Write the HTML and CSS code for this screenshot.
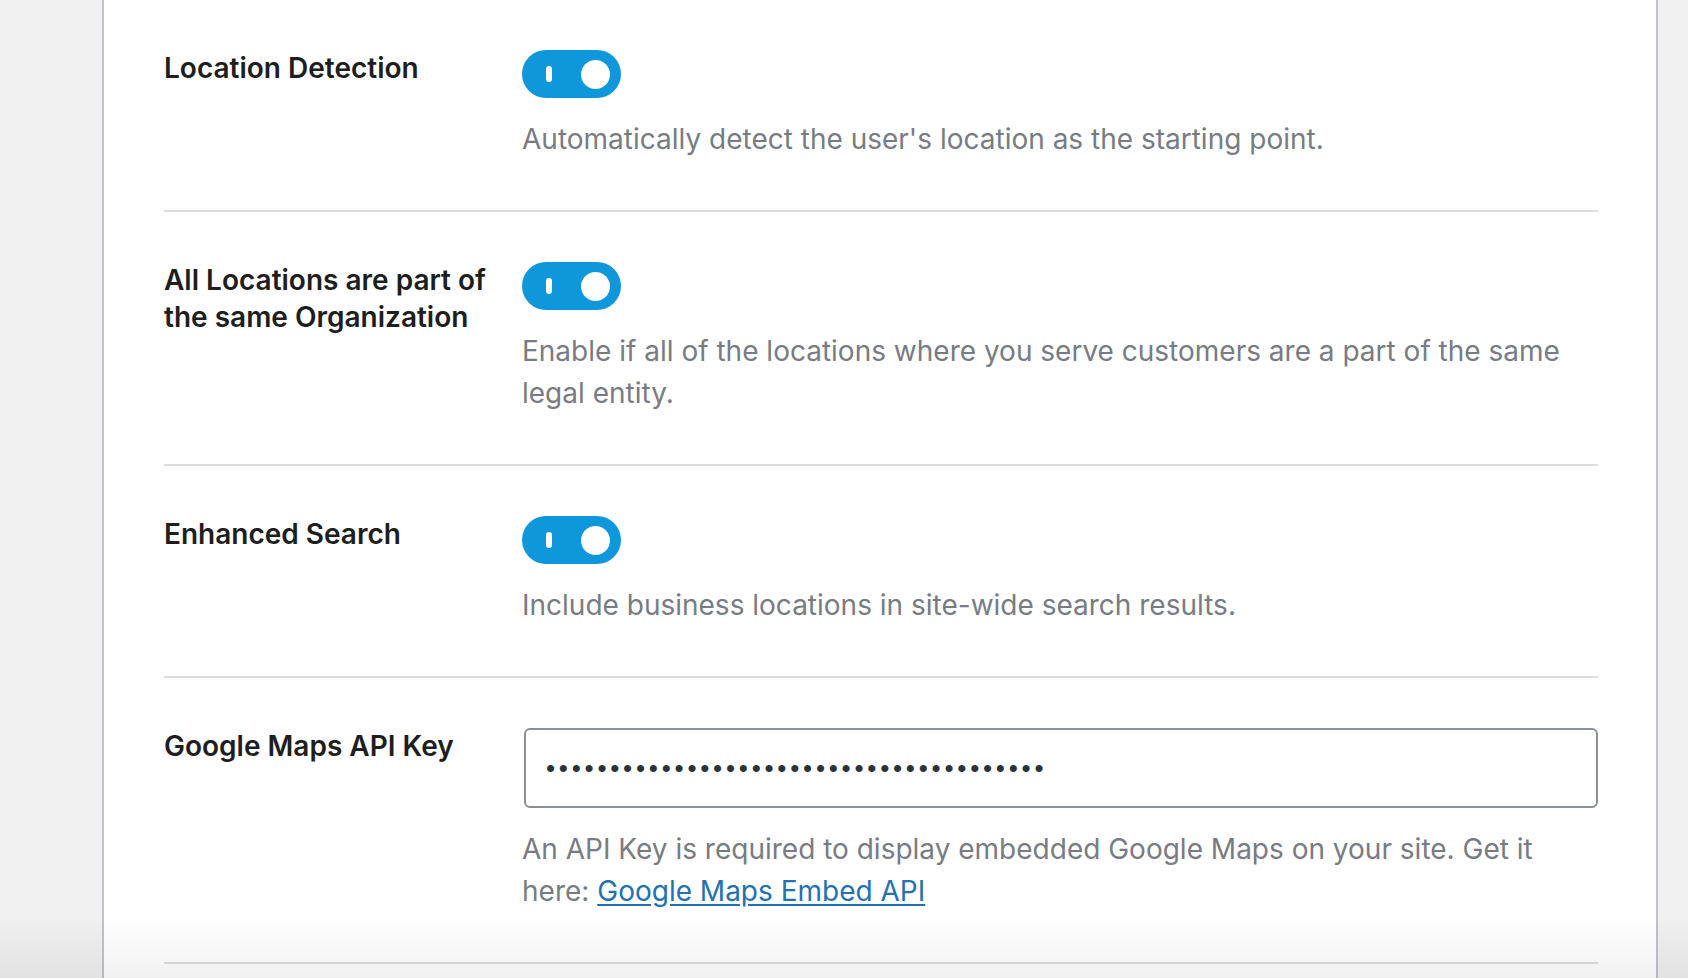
FILE: index.html
```html
<!DOCTYPE html>
<html lang="en">
<head>
<meta charset="utf-8">
<title>Local SEO settings</title>
<link rel="stylesheet" href="styles.css">
</head>
<body>
<div class="page">
  <div class="panel">
    <div class="row">
      <div class="label">Location Detection</div>
      <div class="control">
        <span class="toggle"><span class="toggle-bar"></span><span class="toggle-thumb"></span></span>
        <p class="desc">Automatically detect the user's location as the starting point.</p>
      </div>
    </div>
    <div class="row">
      <div class="label">All Locations are part of the same Organization</div>
      <div class="control">
        <span class="toggle"><span class="toggle-bar"></span><span class="toggle-thumb"></span></span>
        <p class="desc">Enable if all of the locations where you serve customers are a part of the same legal entity.</p>
      </div>
    </div>
    <div class="row">
      <div class="label">Enhanced Search</div>
      <div class="control">
        <span class="toggle"><span class="toggle-bar"></span><span class="toggle-thumb"></span></span>
        <p class="desc">Include business locations in site-wide search results.</p>
      </div>
    </div>
    <div class="row">
      <div class="label">Google Maps API Key</div>
      <div class="control">
        <input class="key-input" type="password" value="abcdefghijklmnopqrstuvwxyz0123456789ABC">
        <p class="desc desc-input">An API Key is required to display embedded Google Maps on your site. Get it here: <a class="link" href="#">Google Maps Embed API</a></p>
      </div>
    </div>
  </div>
</div>
<div class="bottom-fade"></div>
</body>
</html>
```
FILE: styles.css
```css
html, body {
  margin: 0;
  padding: 0;
  height: 100%;
  overflow: hidden;
}
body {
  background: #f0f0f1;
  font-family: Inter, "Noto Sans", sans-serif;
}
.page {
  height: 100%;
  padding: 0 30px 0 102px;
}
.panel {
  height: 100%;
  background: #ffffff;
  border-left: 2px solid #bcc3cd;
  border-right: 2px solid #bcc3cd;
  padding: 0 58px 0 60px;
}
.row {
  display: grid;
  grid-template-columns: 358px 1fr;
  padding: 50px 0;
  border-bottom: 2px solid #dcdcde;
}
.label {
  font-size: 28px;
  line-height: 37px;
  font-weight: 600;
  color: #1e1e1e;
  padding-right: 20px;
}
.control {
  display: flex;
  flex-direction: column;
  align-items: flex-start;
  min-width: 0;
}
.toggle {
  width: 99px;
  height: 48px;
  border-radius: 24px;
  background: #0f97dc;
  display: flex;
  align-items: center;
  justify-content: space-between;
  padding: 0 11px 0 24px;
  box-sizing: border-box;
}
.toggle-bar {
  width: 6px;
  height: 16px;
  border-radius: 3px;
  background: #ffffff;
}
.toggle-thumb {
  width: 29px;
  height: 29px;
  border-radius: 50%;
  background: #ffffff;
}
.desc {
  margin: 20px 0 0;
  font-size: 28px;
  line-height: 42px;
  color: #787c82;
}
.desc-input {
  margin-top: 20px;
}
.link {
  color: #2271b1;
  text-decoration: underline;
  text-underline-offset: 3px;
}
.key-input {
  width: calc(100% - 2px);
  margin-left: 2px;
  height: 80px;
  box-sizing: border-box;
  border: 2px solid #8c8f94;
  border-radius: 6px;
  padding: 0 20px;
  font-family: "Liberation Sans", Arial, sans-serif;
  font-size: 26px;
  letter-spacing: 3.75px;
  color: #2c3338;
  background: #ffffff;
  outline: none;
}
.bottom-fade {
  position: fixed;
  left: 0;
  right: 0;
  bottom: 0;
  height: 60px;
  background: linear-gradient(rgba(0, 0, 0, 0), rgba(0, 0, 0, 0.055));
  pointer-events: none;
}
```
